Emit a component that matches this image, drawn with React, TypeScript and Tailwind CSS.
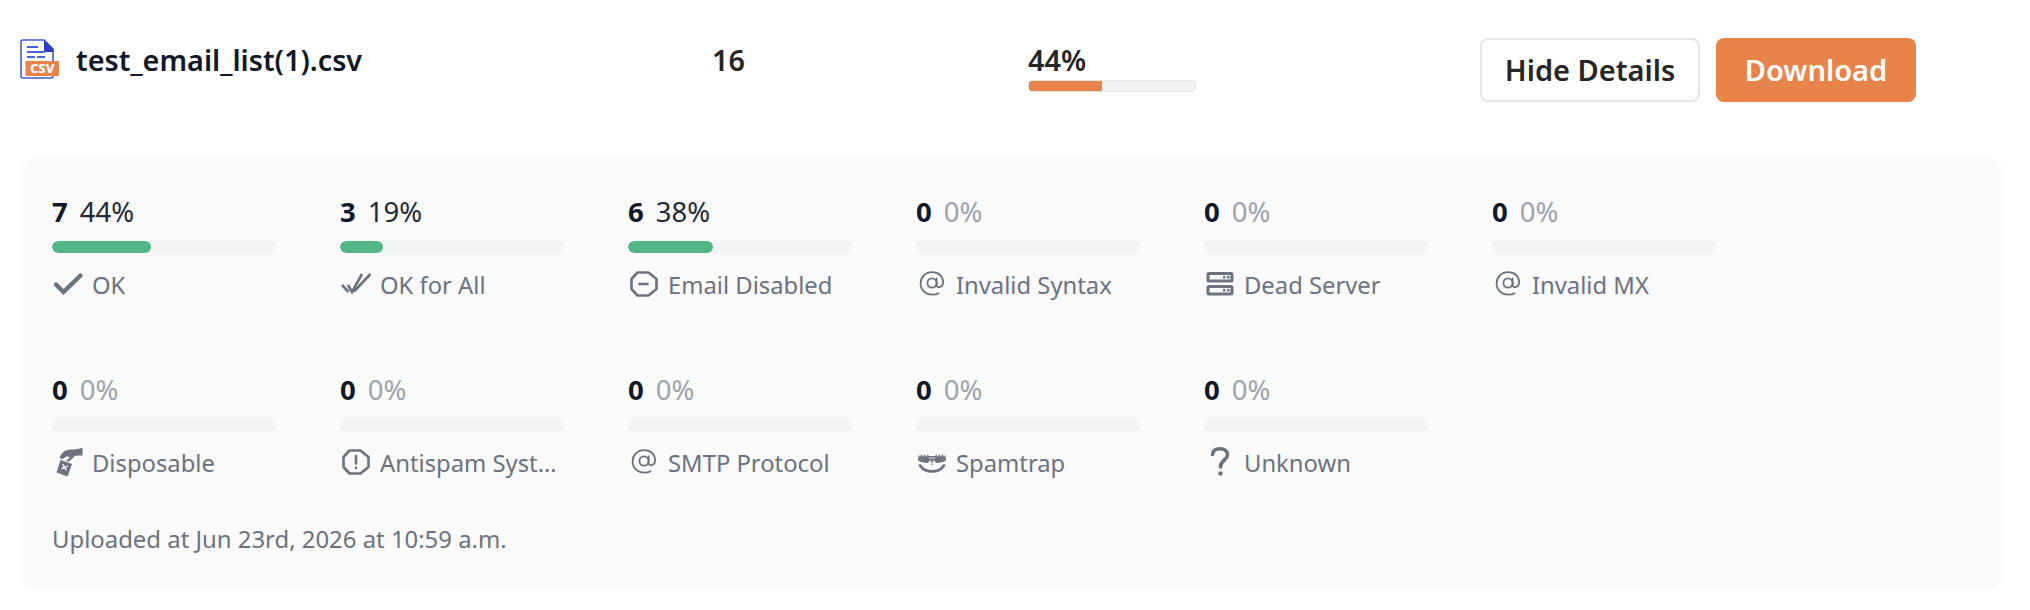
import React from "react";

const Check = () => (
  <svg width="32" height="26" viewBox="0 0 32 26" fill="none" stroke="#6b7280" strokeWidth="4.4" strokeLinecap="round" strokeLinejoin="miter">
    <path d="M4 13.5 L11.5 21 L28.5 4.5" />
  </svg>
);
const DoubleCheck = () => (
  <svg width="32" height="26" viewBox="0 0 32 26" fill="none" stroke="#6b7280" strokeWidth="2.6">
    <path d="M2 14 L8.5 21" />
    <path d="M8 14 L12 21 L22 3" />
    <path d="M14 20.5 L30.5 3" />
  </svg>
);
const Octagon = ({ bang }: { bang?: boolean }) => (
  <svg width="32" height="26" viewBox="0 0 32 26" fill="none" stroke="#6b7280" strokeWidth="2.6" strokeLinecap="round" strokeLinejoin="round">
    <path d="M9.5 1.5 H20.5 L28.5 8 V18 L20.5 24.5 H9.5 L3.5 18 V8 Z" />
    {bang ? (
      <>
        <path d="M16 7 V14.5" />
        <path d="M16 18.7 V19" />
      </>
    ) : (
      <path d="M11.5 13 H19.5" />
    )}
  </svg>
);
const At = () => (
  <svg width="32" height="26" viewBox="0 0 32 26" fill="none" stroke="#6b7280" strokeWidth="1.8" strokeLinecap="round">
    <circle cx="16" cy="12" r="4.6" />
    <path d="M20.6 7.5 V14.2 C20.6 17.2 26.3 16.8 27 12.4 C27.9 5.6 22.6 1.2 16.2 1.2 C9.4 1.2 4.6 6.1 4.6 12.4 C4.6 19.3 10 23.7 16.4 23.7 C18.8 23.7 20.9 23.2 22.6 22.2" />
  </svg>
);
const Server = () => (
  <svg width="32" height="26" viewBox="0 0 32 26" fill="none">
    <path fillRule="evenodd" fill="#6b7280" d="M5 1 H27 A2.5 2.5 0 0 1 29.5 3.5 V9 A2.5 2.5 0 0 1 27 11.5 H5 A2.5 2.5 0 0 1 2.5 9 V3.5 A2.5 2.5 0 0 1 5 1 Z M5.5 4 V8.5 H26.5 V4 Z M19 5 H21.5 V7.5 H19 Z M23 5 H25.5 V7.5 H23 Z" />
    <path fillRule="evenodd" fill="#6b7280" d="M5 14 H27 A2.5 2.5 0 0 1 29.5 16.5 V22 A2.5 2.5 0 0 1 27 24.5 H5 A2.5 2.5 0 0 1 2.5 22 V16.5 A2.5 2.5 0 0 1 5 14 Z M5.5 17 V21.5 H26.5 V17 Z M19 18 H21.5 V20.5 H19 Z M23 18 H25.5 V20.5 H23 Z" />
  </svg>
);
const Disposable = () => (
  <svg width="32" height="30" viewBox="0 0 32 30" fill="#6b7280">
    <path d="M30.5 0.5 V8.5 C26.5 8.3 24 8.5 22 9.5 C20.5 11.8 18 14 15.5 15 L14.5 13.5 L18 10.5 L15 9.2 C13 10.4 11.5 11.4 10 12 L7.5 10.8 C9.5 5 14 2.2 19.5 2.4 C23.5 2.5 27 2 30.5 0.5 Z" />
    <path fillRule="evenodd" d="M8.5 13 L20 17 L15.5 29.5 L4.5 25.5 Z M9.8 17.6 L11.6 20 L9.3 21.2 L10.2 22.4 L12.5 21.2 L13.6 23.6 L15 23 L13.7 20.6 L16 19.6 L15.2 18.4 L12.9 19.4 L11.2 17 Z" />
  </svg>
);
const Spamtrap = () => (
  <svg width="32" height="22" viewBox="0 0 32 22" fill="none">
    <path fill="#6b7280" d="M2.5 3.5 L4 6 L5.5 3 L7 6 L8.5 3 L10 6 L11.5 3.5 L13 5 H19 L20.5 3.5 L22 6 L23.5 3 L25 6 L26.5 3 L28 6 L29.5 3.5 L30 9.5 C27.5 11 24 11.6 20.3 12 L18 9.5 L16 15 L14 9.5 L11.7 12 C8 11.6 4.5 11 2 9.5 Z" />
    <path stroke="#fafafa" strokeWidth="0.8" d="M12.5 7 H19.5 M14.2 9 L16 13 L17.8 9" />
    <path stroke="#6b7280" strokeWidth="2.8" strokeLinecap="round" d="M4 14.5 C7 19.2 11 20.4 16 20.4 C21 20.4 25 19.2 28 14.5" />
  </svg>
);
const Question = () => (
  <svg width="32" height="30" viewBox="0 0 32 30" fill="none" stroke="#6b7280" strokeLinecap="round">
    <path strokeWidth="3.6" d="M8.5 7.5 C9 3.5 12 1.8 16 1.8 C20.5 1.8 23.5 4 23.5 8 C23.5 13 16.5 13 16.5 20" />
    <circle cx="16.5" cy="26.5" r="2.2" fill="#6b7280" stroke="none" />
  </svg>
);
const CsvIcon = () => (
  <svg width="40" height="40" viewBox="0 0 40 40" fill="none">
    <path d="M3 1 H24 L33 10 V37 A2 2 0 0 1 31 39 H3 A2 2 0 0 1 1 37 V3 A2 2 0 0 1 3 1 Z" fill="#fff" stroke="#3f5bd9" strokeWidth="1.6" />
    <path d="M24 0.5 L33.5 10 V13 H25.5 A1.5 1.5 0 0 1 24 11.5 Z" fill="#2a3fc4" />
    <path d="M7 8 H18 M7 13 H25 M7 18 H15 M17 18 H25" stroke="#4a63dc" strokeWidth="1.8" />
    <rect x="5.5" y="22" width="33.5" height="15" fill="#e8834a" />
    <text x="22.2" y="34" textAnchor="middle" fill="#fff" fontFamily="'Noto Sans', sans-serif" fontWeight="800" fontSize="13">CSV</text>
  </svg>
);

type Item = { n: number; pct: number; label: string; icon: React.ReactNode };
const items: Item[] = [
  { n: 7, pct: 44, label: "OK", icon: <Check /> },
  { n: 3, pct: 19, label: "OK for All", icon: <DoubleCheck /> },
  { n: 6, pct: 38, label: "Email Disabled", icon: <Octagon /> },
  { n: 0, pct: 0, label: "Invalid Syntax", icon: <At /> },
  { n: 0, pct: 0, label: "Dead Server", icon: <Server /> },
  { n: 0, pct: 0, label: "Invalid MX", icon: <At /> },
  { n: 0, pct: 0, label: "Disposable", icon: <Disposable /> },
  { n: 0, pct: 0, label: "Antispam System", icon: <Octagon bang /> },
  { n: 0, pct: 0, label: "SMTP Protocol", icon: <At /> },
  { n: 0, pct: 0, label: "Spamtrap", icon: <Spamtrap /> },
  { n: 0, pct: 0, label: "Unknown", icon: <Question /> },
];

function Stat({ item }: { item: Item }) {
  return (
    <div className="w-[224px]">
      <div className="flex h-[30px] items-center gap-[12px] text-[27.5px] leading-[30px]">
        <span className="font-bold text-[#111827]">{item.n}</span>
        <span className={item.n > 0 ? "text-[#1f2937]" : "text-[#9ca3af]"}>{item.pct}%</span>
      </div>
      <div className="mt-[14px] h-[12px] w-full overflow-hidden rounded-full bg-[#f3f4f6]">
        <div className="h-full rounded-full bg-[#53b685]" style={{ width: `${item.pct}%` }} />
      </div>
      <div className="mt-[15px] flex h-[32px] items-center gap-[8px] text-[#6b7280]">
        <span className="flex h-[32px] w-[32px] shrink-0 items-center justify-center">{item.icon}</span>
        <span className="truncate pt-[2px] text-[23.8px] leading-[32px]">{item.label}</span>
      </div>
    </div>
  );
}

export default function App() {
  return (
    <div className="h-[610px] bg-white pl-[20px] pr-[27px] font-['Noto_Sans',sans-serif]">
      <div className="flex h-[158px] items-start pt-[38px]">
        <div className="mt-[1px] flex w-[692px] items-start">
          <CsvIcon />
          <span className="ml-[16px] -mt-[1px] text-[28.8px] font-semibold leading-[44px] text-[#111827]">test_email_list(1).csv</span>
        </div>
        <div className="mt-[1px] w-[316px] text-[28.8px] font-semibold leading-[42px] text-[#262626]">16</div>
        <div className="mt-[6px] w-[452px]">
          <div className="text-[28.8px] font-semibold leading-[32px] text-[#262626]">44%</div>
          <div className="mt-[4px] h-[12px] w-[168px] overflow-hidden rounded-[4px] border border-[#e5e5e5] bg-[#f2f2f2]">
            <div className="-m-px h-[12px] w-[74px] bg-[#e8834a]" />
          </div>
        </div>
        <button className="h-[64px] w-[220px] rounded-[8px] border-2 border-[#e5e5e5] bg-white text-[29px] font-semibold text-[#262626]">Hide Details</button>
        <button className="ml-[16px] h-[64px] w-[200px] rounded-[8px] bg-[#e8834a] text-[29px] font-semibold text-white">Download</button>
      </div>
      <div className="h-[432px] rounded-[16px] bg-[#fafafa] px-[32px] pt-[39px]">
        <div className="flex flex-wrap gap-x-[64px] gap-y-[75px]">
          {items.map((it) => (
            <Stat key={it.label} item={it} />
          ))}
        </div>
        <div className="mt-[45px] text-[23.9px] leading-[32px] text-[#6b7280]">Uploaded at Jun 23rd, 2026 at 10:59 a.m.</div>
      </div>
    </div>
  );
}
